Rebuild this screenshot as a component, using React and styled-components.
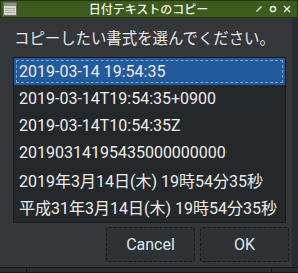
import React, { useState } from "react";
import styled, { createGlobalStyle } from "styled-components";

const GlobalStyle = createGlobalStyle`
  html, body {
    margin: 0;
    padding: 0;
    background: #1d1f20;
  }
  * { box-sizing: border-box; }
`;

const formats = [
  "2019-03-14 19:54:35",
  "2019-03-14T19:54:35+0900",
  "2019-03-14T10:54:35Z",
  "20190314195435000000000",
  "2019年3月14日(木) 19時54分35秒",
  "平成31年3月14日(木) 19時54分35秒",
];

export default function App() {
  const [selected, setSelected] = useState(0);

  return (
    <>
      <GlobalStyle />
      <Window>
        <TitleBar>
          <TitleSide>
            <svg width="14" height="14" viewBox="0 0 14 14">
              <rect x="0.5" y="0.5" width="13" height="13" fill="#d8d8d0" stroke="#6a6a60" />
              <rect x="1" y="1" width="12" height="3" fill="#8e8e86" />
              <line x1="2" y1="6.5" x2="12" y2="6.5" stroke="#a8b89a" />
              <line x1="2" y1="8.5" x2="12" y2="8.5" stroke="#b8b8b0" />
              <line x1="2" y1="10.5" x2="12" y2="10.5" stroke="#a8b89a" />
            </svg>
          </TitleSide>
          <Title>日付テキストのコピー</Title>
          <TitleSide $right>
            <WinButton>
              <svg width="8" height="8" viewBox="0 0 8 8">
                <line x1="1.5" y1="6.5" x2="6.5" y2="1.5" stroke="#f0f0f0" strokeWidth="1.3" />
              </svg>
            </WinButton>
            <WinButton>
              <svg width="8" height="8" viewBox="0 0 8 8">
                <circle cx="4" cy="4" r="2.6" fill="none" stroke="#f0f0f0" strokeWidth="1.5" />
              </svg>
            </WinButton>
            <WinButton>
              <svg width="8" height="8" viewBox="0 0 8 8">
                <path d="M1 1 L7 7 M7 1 L1 7" stroke="#f0f0f0" strokeWidth="1.3" />
              </svg>
            </WinButton>
          </TitleSide>
        </TitleBar>
        <Client>
          <Prompt>コピーしたい書式を選んでください。</Prompt>
          <ListBox>
            {formats.map((f, i) => (
              <Row key={i} $selected={i === selected} onClick={() => setSelected(i)}>
                {f}
              </Row>
            ))}
          </ListBox>
          <ButtonBar>
            <Button>Cancel</Button>
            <Button>OK</Button>
          </ButtonBar>
        </Client>
        <Handle>
          <Grip />
          <HandleMid />
          <Grip />
        </Handle>
      </Window>
    </>
  );
}

const Window = styled.div`
  width: 298px;
  height: 273px;
  display: flex;
  flex-direction: column;
  background: #33373a;
  font-family: Roboto, "Noto Sans CJK JP", sans-serif;
`;

const TitleBar = styled.div`
  height: 18px;
  flex: none;
  display: flex;
  align-items: center;
  padding: 0 3px 0 2px;
  background: #3c5b1c;
  border: 1px solid #243610;
`;

const TitleSide = styled.div`
  width: 52px;
  flex: none;
  display: flex;
  align-items: center;
  justify-content: ${(p) => (p.$right ? "flex-end" : "flex-start")};
`;

const WinButton = styled.div`
  width: 14px;
  height: 14px;
  display: flex;
  align-items: center;
  justify-content: center;
`;

const Title = styled.div`
  flex: 1;
  text-align: center;
  color: #f2f4ee;
  font-family: "Noto Sans CJK JP", sans-serif;
  font-size: 12px;
  font-weight: 500;
  line-height: 16px;
`;

const Client = styled.div`
  flex: 1;
  display: flex;
  flex-direction: column;
  padding: 9px 0 0 13px;
  border-right: 6px solid #2a2d2f;
  min-height: 0;
`;

const Prompt = styled.div`
  font-family: "Noto Sans CJK JP", sans-serif;
  font-size: 15.4px;
  line-height: 20px;
  color: #e8e8e8;
  padding-left: 1px;
  margin-bottom: 10px;
  white-space: nowrap;
`;

const ListBox = styled.div`
  width: 273px;
  height: 166px;
  background: #25282b;
  border: 1px solid #181a1c;
  display: flex;
  flex-direction: column;
`;

const Row = styled.div`
  height: 27px;
  flex: none;
  display: flex;
  align-items: center;
  padding-left: 5px;
  font-size: 16px;
  color: #ececec;
  white-space: nowrap;
  background: ${(p) => (p.$selected ? "#235a9c" : "transparent")};
  outline: ${(p) => (p.$selected ? "1px dashed #7aa4d4" : "none")};
  outline-offset: -3px;
`;

const ButtonBar = styled.div`
  display: flex;
  justify-content: flex-end;
  gap: 5px;
  width: 276px;
  margin-top: 4px;
`;

const Button = styled.button`
  width: 89px;
  height: 35px;
  background: #2f3235;
  border: 1px dashed #1a1c1e;
  border-radius: 3px;
  color: #dde6ef;
  font-family: Roboto, sans-serif;
  font-size: 16px;
`;

const Handle = styled.div`
  height: 6px;
  flex: none;
  display: flex;
  background: #2c2f31;
  border-top: 1px solid #15171a;
  border-bottom: 1px solid #15171a;
`;

const Grip = styled.div`
  width: 27px;
  border-right: 1px solid #15171a;
  &:last-child {
    border-right: none;
    border-left: 1px solid #15171a;
  }
`;

const HandleMid = styled.div`
  flex: 1;
`;
